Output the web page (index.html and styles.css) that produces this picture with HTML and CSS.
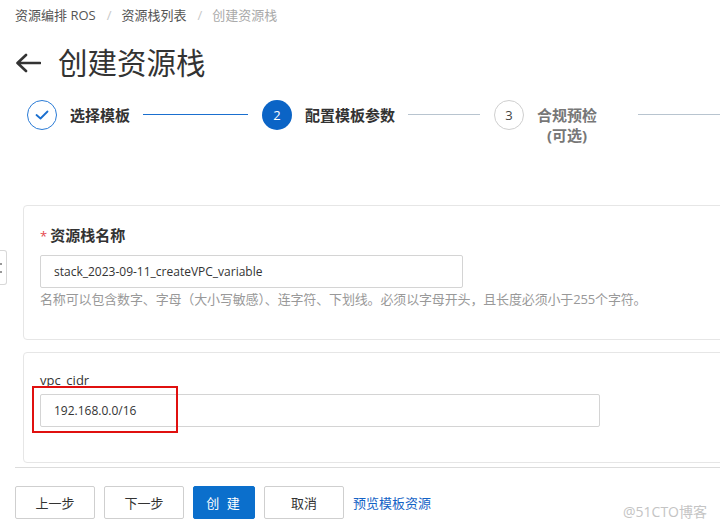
FILE: index.html
```html
<!DOCTYPE html>
<html lang="zh">
<head>
<meta charset="utf-8">
<title>创建资源栈</title>
<link rel="stylesheet" href="styles.css">
</head>
<body>
<div class="page">
  <nav class="crumbs">
    <span class="crumb">资源编排 ROS</span>
    <span class="sep">/</span>
    <span class="crumb">资源栈列表</span>
    <span class="sep">/</span>
    <span class="crumb current">创建资源栈</span>
  </nav>

  <header class="title-row">
    <svg class="back" width="26" height="20" viewBox="0 0 26 20" aria-hidden="true">
      <path d="M25 10H3M11 2L2.5 10L11 18" fill="none" stroke="#333" stroke-width="2.6" stroke-linecap="round" stroke-linejoin="round"/>
    </svg>
    <h1 class="title">创建资源栈</h1>
  </header>

  <div class="steps">
    <div class="step step-first">
      <span class="dot done">
        <svg width="14" height="10" viewBox="0 0 14 10" aria-hidden="true"><path d="M1.5 5L5.5 8.5L12.5 1.5" fill="none" stroke="#1a6fcf" stroke-width="1.8" stroke-linecap="round" stroke-linejoin="round"/></svg>
      </span>
      <span class="label">选择模板</span>
      <span class="line blue"></span>
    </div>
    <div class="step step-second">
      <span class="dot active">2</span>
      <span class="label">配置模板参数</span>
      <span class="line"></span>
    </div>
    <div class="step step-third">
      <span class="dot todo">3</span>
      <span class="label muted">合规预检<br>(可选)</span>
      <span class="line"></span>
    </div>
  </div>

  <div class="side-tab"><i></i><i></i></div>

  <section class="card card-name">
    <div class="field-label strong"><span class="req">*</span>资源栈名称</div>
    <div class="input input-name">stack_2023-09-11_createVPC_variable</div>
    <div class="help">名称可以包含数字、字母（大小写敏感）、连字符、下划线。必须以字母开头，且长度必须小于255个字符。</div>
  </section>

  <section class="card card-param">
    <div class="field-label">vpc_cidr</div>
    <div class="input-wrap">
      <div class="input input-cidr">192.168.0.0/16</div>
      <span class="mark"></span>
    </div>
  </section>

  <footer class="actions">
    <button class="btn">上一步</button>
    <button class="btn">下一步</button>
    <button class="btn primary">创 建</button>
    <button class="btn">取消</button>
    <a class="link" href="#">预览模板资源</a>
    <span class="watermark">@51CTO博客</span>
  </footer>
</div>
</body>
</html>
```

FILE: styles.css
```css
* { box-sizing: border-box; }

html, body {
  margin: 0;
  padding: 0;
  background: #fff;
  overflow: hidden;
}

body {
  width: 720px;
  height: 528px;
  font-family: "Open Sans", "Noto Sans CJK SC", sans-serif;
  color: #333;
}

.page {
  position: relative;
  padding-left: 15px;
}

.crumbs {
  display: flex;
  align-items: center;
  height: 20px;
  margin-top: 5px;
  font-size: 13px;
  line-height: 20px;
  color: #555;
}

.sep {
  color: #c8c8c8;
  margin: 0 10px 0 11px;
}

.crumb.current { color: #aaa; }

.title-row {
  display: flex;
  align-items: center;
  height: 40px;
  margin-top: 18px;
}

.back { flex: none; }

.title {
  margin: 0 0 0 17px;
  font-size: 29.5px;
  font-weight: 400;
  line-height: 40px;
  color: #333;
}

.steps {
  display: flex;
  margin-top: 17px;
  margin-left: 12px;
  height: 105px;
}

.step {
  display: flex;
  align-items: flex-start;
  width: 235px;
  flex: none;
}

.step-second { width: 232px; }
.step-third { width: 240px; }

.dot {
  flex: none;
  width: 30px;
  height: 30px;
  border-radius: 50%;
  display: flex;
  align-items: center;
  justify-content: center;
  font-size: 13px;
}

.dot.done { border: 1.5px solid #2a7bd6; }
.dot.active { background: #0b64c6; color: #fff; }
.dot.todo { border: 1.5px solid #cfcfcf; color: #444; }

.label {
  margin-left: 13px;
  font-size: 15px;
  font-weight: 700;
  line-height: 20px;
  padding-top: 5px;
  color: #333;
  white-space: nowrap;
}

.label.muted {
  color: #777;
  text-align: center;
}

.line {
  flex: 1;
  height: 1px;
  margin: 14px 14px 0 13px;
  background: #b8c4cf;
}

.line.blue { background: #1a6fcf; }

.step-third .line { margin-left: 41px; }

.side-tab {
  position: absolute;
  left: 0;
  top: 245px;
  width: 7px;
  height: 35px;
  border: 1px solid #d8d8d8;
  border-left: none;
  border-radius: 0 3px 3px 0;
  background: #fff;
  display: flex;
  flex-direction: column;
  justify-content: center;
  gap: 6px;
}

.side-tab i {
  display: block;
  width: 2px;
  height: 2px;
  background: #999;
}

.card {
  margin-left: 8px;
  width: 720px;
  border: 1px solid #e6e6e6;
  border-radius: 4px;
  padding: 0 16px;
  background: #fff;
}

.card-name {
  height: 135px;
  padding-top: 19px;
}

.card-param {
  margin-top: 12px;
  height: 111px;
  padding-top: 17px;
}

.field-label {
  font-size: 13px;
  line-height: 20px;
  color: #333;
}

.field-label.strong {
  font-size: 15px;
  font-weight: 700;
  line-height: 21px;
}

.req {
  color: #e5484d;
  font-weight: 400;
  font-size: 13px;
  margin-right: 3px;
}

.input {
  height: 33px;
  border: 1px solid #d4d4d4;
  border-radius: 2px;
  padding-left: 13px;
  font-size: 12px;
  line-height: 31px;
  color: #333;
  background: #fff;
}

.input-name {
  margin-top: 8px;
  width: 423px;
}

.help {
  margin-top: 2px;
  font-size: 13px;
  line-height: 18px;
  color: #999;
  white-space: nowrap;
  letter-spacing: -0.15px;
}

.input-wrap {
  position: relative;
  margin-top: 4px;
  width: 560px;
}

.mark {
  position: absolute;
  left: -8px;
  top: -8px;
  width: 146px;
  height: 47px;
  border: 2px solid #e0100f;
}

.actions {
  position: relative;
  display: flex;
  align-items: center;
  gap: 9px;
  margin-top: 4px;
  padding-top: 18px;
  border-top: 1px solid #dcdcdc;
  width: 720px;
}

.btn {
  height: 33px;
  width: 80px;
  border: 1px solid #cfcfcf;
  border-radius: 2px;
  background: #fff;
  font-family: inherit;
  font-size: 13px;
  color: #333;
  padding: 0;
}

.btn.primary {
  width: 62px;
  background: #0b6fcc;
  border-color: #0b6fcc;
  color: #fff;
  letter-spacing: 2px;
}

.link {
  margin-left: 0;
  font-size: 13px;
  color: #1463c6;
  text-decoration: none;
}

.watermark {
  position: absolute;
  left: 608px;
  top: 33px;
  font-size: 14px;
  color: #c4c4c4;
}
```
